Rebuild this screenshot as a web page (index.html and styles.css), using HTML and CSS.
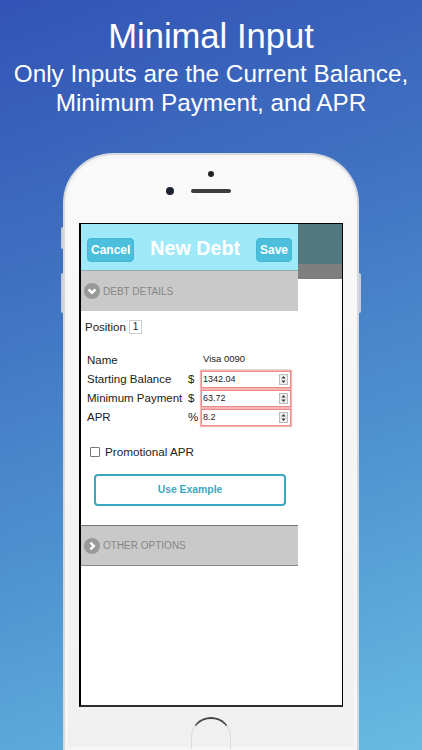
FILE: index.html
```html
<!DOCTYPE html>
<html lang="en">
<head>
    <meta charset="UTF-8">
    <title>Minimal Input</title>
    <link rel="stylesheet" href="styles.css">
</head>
<body>
<div class="title">Minimal Input</div>
<div class="subtitle">Only Inputs are the Current Balance,<br>Minimum Payment, and APR</div>

<div class="phone">
    <em class="key key-mute"></em>
    <em class="key key-vol"></em>
    <em class="key key-power"></em>
    <div class="speaker-row">
        <span class="sensor"></span>
        <div class="cam-row">
            <span class="camera"></span>
            <span class="speaker"></span>
        </div>
    </div>
    <div class="screen">
        <div class="app">
            <div class="bar">
                <span class="btn">Cancel</span>
                <span class="bar-title">New Debt</span>
                <span class="btn">Save</span>
            </div>
            <div class="section details">
                <svg class="chev" viewBox="0 0 16 16"><circle cx="8" cy="8" r="8" fill="#999"/><path d="M4.6 6.4 8 9.8l3.4-3.4" fill="none" stroke="#fff" stroke-width="2.4"/></svg>
                <span>DEBT DETAILS</span>
            </div>
            <div class="position">Position <span class="pos-box">1</span></div>
            <div class="form">
                <span class="lbl">Name</span><span></span><span class="name-val">Visa 0090</span>
                <span class="lbl">Starting Balance</span><span class="lbl">$</span>
                <span class="field">1342.04<svg class="spin" viewBox="0 0 7 9"><path d="M1.500 3.500 3.500 1l2 2.500zM1.500 5.500h4l-2 2.500z" fill="#333"/></svg></span>
                <span class="lbl">Minimum Payment</span><span class="lbl">$</span>
                <span class="field">63.72<svg class="spin" viewBox="0 0 7 9"><path d="M1.500 3.500 3.500 1l2 2.500zM1.500 5.500h4l-2 2.500z" fill="#333"/></svg></span>
                <span class="lbl">APR</span><span class="lbl">%</span>
                <span class="field">8.2<svg class="spin" viewBox="0 0 7 9"><path d="M1.500 3.500 3.500 1l2 2.500zM1.500 5.500h4l-2 2.500z" fill="#333"/></svg></span>
            </div>
            <div class="promo"><span class="check"></span>Promotional APR</div>
            <div class="example">Use Example</div>
            <div class="section other">
                <svg class="chev" viewBox="0 0 16 16"><circle cx="8" cy="8" r="8" fill="#999"/><path d="M6.4 4.6 9.8 8l-3.4 3.4" fill="none" stroke="#fff" stroke-width="2.4"/></svg>
                <span>OTHER OPTIONS</span>
            </div>
        </div>
        <div class="side">
            <div class="side-top"></div>
            <div class="side-grey"></div>
        </div>
    </div>
    <div class="home"></div>
</div>
</body>
</html>
```

FILE: styles.css
```css
* {
    margin: 0;
    padding: 0;
    box-sizing: border-box;
}

html, body {
    width: 422px;
    height: 750px;
    overflow: hidden;
}

body {
    font-family: "Liberation Sans", Arial, sans-serif;
    background: linear-gradient(160deg, #3253b6 0%, #3f6fc0 30%, #4f93d0 65%, #68bae2 100%);
    color: #fff;
    text-align: center;
}

.title {
    padding-top: 16px;
    font-size: 34.6px;
    line-height: 40px;
}

.subtitle {
    margin-top: 3px;
    font-size: 24.3px;
    line-height: 29px;
}

/* phone body */
.phone {
    position: relative;
    width: 296px;
    height: 597px;
    margin: 36px 0 0 63px;
    padding: 0 14px;
    border: 2px solid #d6d9dd;
    border-bottom: 0;
    border-radius: 50px 50px 0 0;
    background: linear-gradient(#fafafa, #f0f0f0);
    box-shadow: inset 0 0 0 3px #f6f6f7;
}

.key {
    position: absolute;
    width: 2px;
    background: #c9ced4;
}

.key-mute { left: -4px; top: 72px; height: 22px; border-radius: 2px 0 0 2px; }
.key-vol { left: -4px; top: 118px; height: 40px; border-radius: 2px 0 0 2px; }
.key-power { right: -4px; top: 118px; height: 40px; border-radius: 0 2px 2px 0; }

.speaker-row {
    display: flex;
    flex-direction: column;
    align-items: center;
    height: 68px;
    padding-top: 16px;
}

.sensor {
    width: 6px;
    height: 6px;
    border-radius: 50%;
    background: #222;
}

.cam-row {
    display: flex;
    align-items: center;
    gap: 17px;
    margin-top: 10px;
    margin-left: -25px;
}

.camera {
    width: 8px;
    height: 8px;
    border-radius: 50%;
    background: #1d2230;
}

.speaker {
    width: 40px;
    height: 4px;
    border-radius: 2px;
    background: #3b3d40;
}

/* screen */
.screen {
    display: flex;
    width: 264px;
    height: 484px;
    border: 1px solid #000;
    border-left-width: 2px;
    border-bottom: 2px solid #2c2c2c;
    background: #fff;
}

.app {
    width: 217px;
    color: #222;
    text-align: left;
}

.side {
    flex: 1;
}

.side-top {
    height: 40px;
    background: #527880;
}

.side-grey {
    height: 15px;
    background: #7f7f7f;
}

.bar {
    display: flex;
    align-items: center;
    justify-content: space-between;
    height: 47px;
    padding: 5px 6px 0;
    background: #a0e9f8;
    border-bottom: 1px solid #92a9b0;
}

.btn {
    height: 24px;
    padding: 0 3px;
    border: 1px solid #43b8d4;
    border-radius: 4px;
    background: #4bbfdb;
    color: #fff;
    font-size: 12px;
    font-weight: bold;
    line-height: 23px;
}

.bar-title {
    margin-bottom: 3px;
    color: #fff;
    font-size: 19.700px;
    font-weight: bold;
}

.section {
    display: flex;
    align-items: center;
    gap: 3px;
    padding-left: 3px;
    background: #c9c9c9;
    color: #868686;
    font-size: 10px;
}

.details {
    height: 40px;
}

.chev {
    width: 16px;
    height: 16px;
}

.position {
    margin: 8px 0 0 4px;
    font-size: 11.500px;
    line-height: 16px;
}

.pos-box {
    display: inline-block;
    width: 13px;
    height: 14px;
    border: 1px solid #ccc;
    font-size: 10px;
    line-height: 12px;
    text-align: center;
    vertical-align: 1px;
}

.form {
    display: grid;
    grid-template-columns: 101px 13px 90px;
    grid-auto-rows: 19px;
    align-items: center;
    margin: 16px 0 0 6px;
    font-size: 11.500px;
}

.lbl {
    padding-bottom: 2px;
}

.name-val {
    height: 100%;
    padding: 2px 0 0 2px;
    border-bottom: 1px solid #ddd;
    font-size: 9.500px;
}

.field {
    position: relative;
    height: 17px;
    padding-left: 1px;
    border: 1px solid #ef8a8a;
    box-shadow: 0 0 1px 1px #f6b5b5;
    font-size: 9px;
    line-height: 15px;
}

.spin {
    position: absolute;
    top: 2px;
    right: 2px;
    width: 9px;
    height: 11px;
    border: 1px solid #bbb;
    background: #eee;
}

.promo {
    display: flex;
    align-items: center;
    gap: 5px;
    margin: 17px 0 0 9px;
    font-size: 11.700px;
    line-height: 16px;
}

.check {
    width: 10px;
    height: 10px;
    border: 1px solid #777;
    border-radius: 1px;
}

.example {
    width: 192px;
    height: 32px;
    margin: 14px 0 0 13px;
    border: 2px solid #3aa9bf;
    border-radius: 4px;
    color: #3aa9bf;
    font-size: 10.400px;
    font-weight: bold;
    line-height: 28px;
    text-align: center;
}

.other {
    height: 41px;
    margin-top: 19px;
    border-top: 1px solid #777;
    border-bottom: 1px solid #888;
}

.home {
    width: 40px;
    height: 32px;
    margin: 10px auto 0;
    border: 1px solid #ddd;
    border-top: 2px solid #444;
    border-bottom: 0;
    border-radius: 20px 20px 0 0;
}
```
